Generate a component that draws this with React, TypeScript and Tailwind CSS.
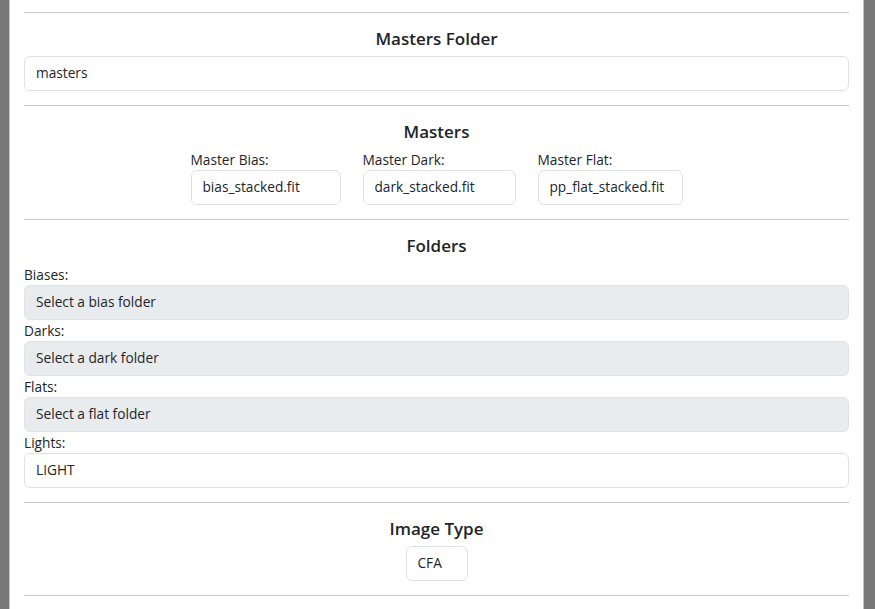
import React from "react";

const font = { fontFamily: '"Open Sans", "Noto Sans", sans-serif' };

function Hr({ className = "" }: { className?: string }) {
  return <div className={"h-px bg-[#c9c9c9] " + className} />;
}

function Heading({ children }: { children: React.ReactNode }) {
  return (
    <div className="text-center text-[17px] leading-[21px] font-semibold text-[#212529] mt-[15px] mb-[7px]">
      {children}
    </div>
  );
}

function Field({ value, className = "", disabled = false }: { value: string; className?: string; disabled?: boolean }) {
  return (
    <div
      className={
        "h-[35px] flex items-center px-[11px] rounded-[6px] border border-[#dee2e6] text-[13.7px] text-[#212529] " +
        (disabled ? "bg-[#e9ecef] " : "bg-white ") +
        className
      }
    >
      {value}
    </div>
  );
}

function Label({ children }: { children: React.ReactNode }) {
  return <div className="text-[13.7px] leading-[21px] text-[#212529]">{children}</div>;
}

export default function App() {
  const masters = [
    { label: "Master Bias:", value: "bias_stacked.fit", w: "w-[150px]" },
    { label: "Master Dark:", value: "dark_stacked.fit", w: "w-[153px]" },
    { label: "Master Flat:", value: "pp_flat_stacked.fit", w: "w-[145px]" },
  ];
  return (
    <div className="w-[875px] h-[609px] overflow-hidden bg-[#787878]" style={font}>
      <div className="ml-[9px] w-[855px] h-[609px] bg-white border-x border-[#c4c4c4] px-[14px] pt-[12px]">
        <Hr />
        <Heading>Masters Folder</Heading>
        <Field value="masters" className="h-[34px]" />
        <Hr className="mt-[14px]" />

        <Heading>Masters</Heading>
        <div className="flex justify-center gap-[22px]">
          {masters.map((m) => (
            <div key={m.label} className={m.w}>
              <Label>{m.label}</Label>
              <Field value={m.value} className="h-[34px]" />
            </div>
          ))}
        </div>
        <Hr className="mt-[14px]" />

        <Heading>Folders</Heading>
        <div className="pt-[1px]">
          <Label>Biases:</Label>
          <Field value="Select a bias folder" disabled />
          <Label>Darks:</Label>
          <Field value="Select a dark folder" disabled />
          <Label>Flats:</Label>
          <Field value="Select a flat folder" disabled />
          <Label>Lights:</Label>
          <Field value="LIGHT" />
        </div>
        <Hr className="mt-[14px]" />

        <Heading>Image Type</Heading>
        <div className="flex justify-center">
          <Field value="CFA" className="w-[62px] h-[34px]" />
        </div>
        <Hr className="mt-[14px]" />
      </div>
    </div>
  );
}
